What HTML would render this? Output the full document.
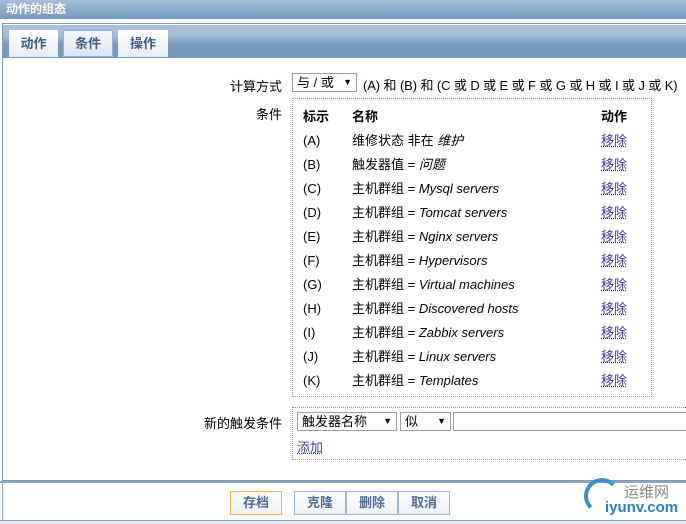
<!DOCTYPE html>
<html><head><meta charset="utf-8"><style>
body{margin:0;width:686px;height:524px;overflow:hidden;background:#fff;font-family:"Liberation Sans","Noto Sans CJK SC",sans-serif;font-size:13px;color:#000;position:relative}
.a{position:absolute}
.title{left:0;top:0;width:686px;height:19px;background:linear-gradient(#a7bed6,#7399be);color:#fff;font-weight:bold;font-size:12px;line-height:19px;padding-left:6px;box-sizing:border-box}
.frame{left:2px;top:23px;width:690px;height:458px;border:1px solid #7f9ab6;box-sizing:border-box}
.tabbar{left:3px;top:25px;width:686px;height:33px;background:linear-gradient(#a7bed6 0,#a7bed6 30%,#7399be 60%,#7399be)}
.tab{top:30px;height:27px;background:linear-gradient(#fff,#e6ecf3);color:#3d5e86;font-weight:bold;font-size:13px;line-height:27px;text-align:center}
.lbl{text-align:right;width:80px}
.sel{border:1px solid #a09c8c;height:19px;box-sizing:border-box;background:#fff;line-height:17px;padding-left:4px}
.box{left:292px;top:98px;width:360px;height:299px;border:1px dotted #8c95c4;box-sizing:border-box}
.lnk{color:#3b3f9c;text-decoration:underline dotted}
.btn{top:491px;height:24px;border:1px solid #9fb5cd;box-sizing:border-box;background:linear-gradient(#fff,#edf2f7);color:#4a6c94;font-weight:bold;font-size:13px;line-height:22px;text-align:center}
i{font-style:italic}
</style></head><body>
<div class="a title">动作的组态</div>
<div class="a frame"></div>
<div class="a tabbar"></div>
<div class="a tab" style="left:9px;width:49px">动作</div>
<div class="a tab" style="left:63px;width:50px;border:1px solid #8fb0e6;box-sizing:border-box;line-height:25px;background:linear-gradient(#f4f7fb,#dde5ef)">条件</div>
<div class="a tab" style="left:118px;width:50px">操作</div>

<div class="a lbl" style="left:202px;top:76px">计算方式</div>
<div class="a sel" style="left:292px;top:73px;width:65px">与 / 或 <span style="position:absolute;right:4px;font-size:9px">▼</span></div>
<div class="a" style="left:363px;top:75px;letter-spacing:-0.1px">(A) 和 (B) 和 (C 或 D 或 E 或 F 或 G 或 H 或 I 或 J 或 K)</div>
<div class="a lbl" style="left:202px;top:104px">条件</div>
<div class="a box"></div>
<div class="a" style="left:303px;top:106px;font-weight:bold">标示</div>
<div class="a" style="left:352px;top:106px;font-weight:bold">名称</div>
<div class="a" style="left:601px;top:106px;font-weight:bold">动作</div>
<div class="a" style="left:303px;top:129px;line-height:24px">(A)<br>(B)<br>(C)<br>(D)<br>(E)<br>(F)<br>(G)<br>(H)<br>(I)<br>(J)<br>(K)</div>
<div class="a" style="left:352px;top:129px;line-height:24px">维修状态 非在 <i>维护</i><br>触发器值 = <i>问题</i><br>主机群组 = <i>Mysql servers</i><br>主机群组 = <i>Tomcat servers</i><br>主机群组 = <i>Nginx servers</i><br>主机群组 = <i>Hypervisors</i><br>主机群组 = <i>Virtual machines</i><br>主机群组 = <i>Discovered hosts</i><br>主机群组 = <i>Zabbix servers</i><br>主机群组 = <i>Linux servers</i><br>主机群组 = <i>Templates</i></div>
<div class="a lnk" style="left:601px;top:129px;line-height:24px">移除<br>移除<br>移除<br>移除<br>移除<br>移除<br>移除<br>移除<br>移除<br>移除<br>移除</div>

<div class="a lbl" style="left:202px;top:413px">新的触发条件</div>
<div class="a" style="left:292px;top:407px;width:400px;height:53px;border:1px dotted #8c95c4;box-sizing:border-box"></div>
<div class="a sel" style="left:297px;top:412px;width:100px">触发器名称<span style="position:absolute;right:4px;font-size:9px">▼</span></div>
<div class="a sel" style="left:400px;top:412px;width:51px">似<span style="position:absolute;right:4px;font-size:9px">▼</span></div>
<div class="a sel" style="left:453px;top:412px;width:240px"></div>
<div class="a lnk" style="left:297px;top:437px">添加</div>

<div class="a" style="left:0;top:481px;width:686px;height:2px;background:#8ba4bf"></div>
<div class="a" style="left:2px;top:483px;width:1px;height:37px;background:#8ba4bf"></div>
<div class="a" style="left:0;top:520px;width:686px;height:1px;background:#8ba4bf"></div>
<div class="a" style="left:0;top:521px;width:686px;height:3px;background:#e8edf3"></div>
<div class="a btn" style="left:230px;width:52px;border-color:#f5b04a">存档</div>
<div class="a btn" style="left:294px;width:52px">克隆</div>
<div class="a btn" style="left:346px;width:52px">删除</div>
<div class="a btn" style="left:398px;width:52px">取消</div>
<div class="a" style="left:584px;top:478px;width:36px;height:36px;border-radius:50%;border:4px solid #3a8fd0;border-right-color:transparent;border-bottom-color:transparent;box-sizing:border-box"></div>
<div class="a" style="left:624px;top:481px;color:#888;font-size:15px">运维网</div>
<div class="a" style="left:605px;top:499px;color:#2c7fc4;font-size:15px;font-weight:bold">iyunv.com</div>
</body></html>
